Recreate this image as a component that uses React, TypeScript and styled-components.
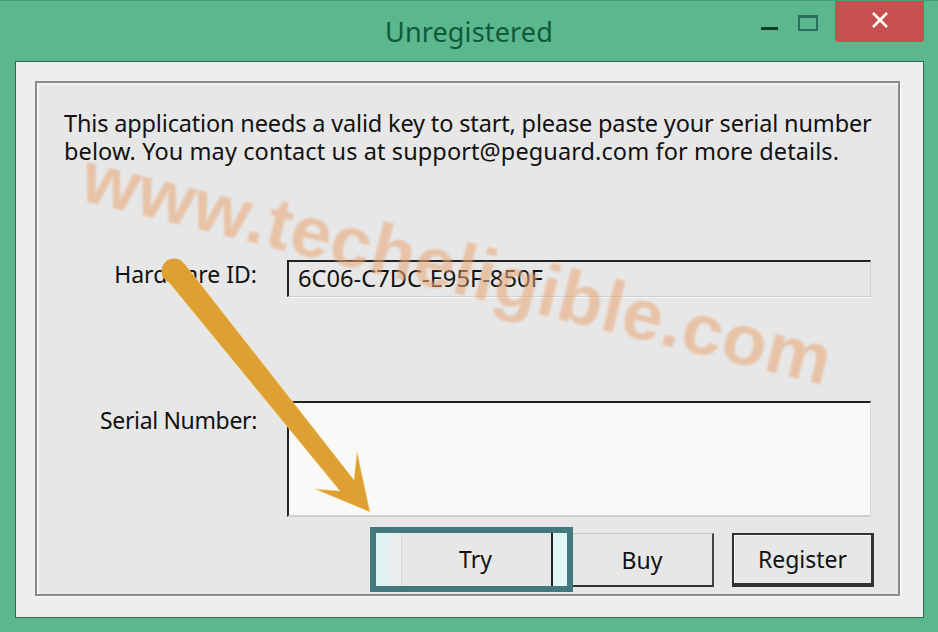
import React from "react";
import styled, { createGlobalStyle } from "styled-components";

const GlobalStyle = createGlobalStyle`
  html, body {
    margin: 0;
    padding: 0;
    background: #5bb78d;
  }
`;

function App() {
  return (
    <Window>
      <GlobalStyle />
      <TitleBar>
        <Title>Unregistered</Title>
        <MinimizeBtn />
        <MaximizeBtn />
        <CloseBtn>
          <svg width="18" height="16" viewBox="0 0 18 16">
            <path d="M2 1 L16 15 M16 1 L2 15" stroke="#fff" strokeWidth="2.6" fill="none" />
          </svg>
        </CloseBtn>
      </TitleBar>
      <Body>
        <GroupBox>
          <Message>
            <MessageLine $spacing={-0.16}>
              This application needs a valid key to start, please paste your serial number
            </MessageLine>
            <MessageLine $spacing={0.1}>
              below. You may contact us at support@peguard.com for more details.
            </MessageLine>
          </Message>
          <HardwareRow>
            <FieldLabel>Hardware ID:</FieldLabel>
            <ReadOnlyField>6C06-C7DC-E95F-850F</ReadOnlyField>
          </HardwareRow>
          <SerialRow>
            <SerialLabel>Serial Number:</SerialLabel>
            <SerialField />
          </SerialRow>
          <ButtonRow>
            <FocusRing>
              <TryButton>Try</TryButton>
            </FocusRing>
            <BuyButton>Buy</BuyButton>
            <RegisterButton>Register</RegisterButton>
          </ButtonRow>
        </GroupBox>
      </Body>
      <Watermark>www.techeligible.com</Watermark>
      <Arrow width="938" height="632" viewBox="0 0 938 632">
        <path
          d="M167 279 L340 490 L315 488 L370 511 L357 451 L354 479 L184 262 Z"
          fill="#dea033"
          stroke="#f5d98a"
          strokeWidth="1"
          strokeOpacity="0.5"
        />
        <circle cx="174" cy="270" r="12.5" fill="#dea033" />
      </Arrow>
    </Window>
  );
}

export default App;

const Window = styled.div`
  position: relative;
  width: 938px;
  height: 632px;
  box-sizing: border-box;
  overflow: hidden;
  display: flex;
  flex-direction: column;
  background: #5bb78d;
  border-top: 1px solid #4a9b77;
  padding: 0 14px 14px 15px;
  font-family: "Noto Sans", "DejaVu Sans", sans-serif;
  color: #111;
`;

const TitleBar = styled.div`
  position: relative;
  flex: 0 0 60px;
  display: flex;
  align-items: flex-start;
`;

const Title = styled.div`
  position: absolute;
  left: 370px;
  top: 12px;
  font-size: 27px;
  line-height: 38px;
  color: #0f5a3c;
  letter-spacing: 0.15px;
`;

const MinimizeBtn = styled.div`
  position: absolute;
  left: 746px;
  top: 26px;
  width: 17px;
  height: 3px;
  background: #0d3d28;
`;

const MaximizeBtn = styled.div`
  position: absolute;
  left: 783px;
  top: 14px;
  width: 20px;
  height: 16px;
  box-sizing: border-box;
  border: 2px solid #2c6e5a;
  border-top-width: 3px;
`;

const CloseBtn = styled.div`
  position: absolute;
  left: 820px;
  top: -1px;
  width: 89px;
  height: 42px;
  display: flex;
  align-items: center;
  justify-content: center;
  padding-bottom: 2px;
  box-sizing: border-box;
  background: #c94f50;
  border-radius: 0 0 3px 3px;
`;

const Body = styled.div`
  flex: 1;
  min-width: 0;
  display: flex;
  box-sizing: border-box;
  background: #eeefed;
  border: 1px solid #2f6b52;
  padding: 19px 23px 21px 19px;
`;

const GroupBox = styled.div`
  flex: 1;
  min-width: 0;
  display: flex;
  flex-direction: column;
  box-sizing: border-box;
  background: #e7e7e7;
  border: 2px solid #8a8a8a;
  box-shadow: inset 2px 2px 0 #f4f4f4, 1px 1px 0 #fafafa;
  padding: 26px 26px 0 27px;
`;

const Message = styled.div`
  font-size: 23.5px;
  line-height: 28px;
  white-space: nowrap;
  color: #111;
`;

const MessageLine = styled.div<{ $spacing: number }>`
  letter-spacing: ${(p) => p.$spacing}px;
`;

const HardwareRow = styled.div`
  display: grid;
  grid-template-columns: 194px 584px;
  column-gap: 30px;
  margin-top: 95px;
  margin-left: -1px;
`;

const SerialRow = styled(HardwareRow)`
  margin-top: 104px;
`;

const FieldLabel = styled.div`
  font-size: 23px;
  line-height: 28px;
  text-align: right;
  white-space: nowrap;
`;

const SerialLabel = styled(FieldLabel)`
  padding-top: 5px;
  letter-spacing: -0.35px;
`;

const ReadOnlyField = styled.div`
  height: 37px;
  box-sizing: border-box;
  border-top: 2px solid #222;
  border-left: 2px solid #222;
  border-right: 1px solid #d0d0d0;
  border-bottom: 1px solid #cfcfcf;
  box-shadow: 0 1px 0 #f7f7f7;
  padding-left: 9px;
  font-size: 23.7px;
  line-height: 33px;
  color: #111;
`;

const SerialField = styled.div`
  height: 116px;
  box-sizing: border-box;
  background: #f9f9f8;
  border-top: 2px solid #222;
  border-left: 2px solid #222;
  border-right: 1px solid #d8d8d8;
  border-bottom: 2px solid #cfcfcf;
`;

const ButtonRow = styled.div`
  display: flex;
  align-items: flex-start;
  justify-content: flex-end;
  margin-top: 10px;
  margin-right: -2px;
`;

const FocusRing = styled.div`
  position: relative;
  width: 203px;
  height: 65px;
  box-sizing: border-box;
  border: 6px solid #43797c;
  background: linear-gradient(
    to right,
    #dcf5f5 0,
    #ececec 22px,
    #ececec calc(100% - 14px),
    #e2f6f5 calc(100% - 14px)
  );
  padding: 0 14px 0 25px;
  margin-right: -6px;
`;

const BaseButton = styled.button`
  font-family: inherit;
  font-size: 23px;
  color: #111;
  box-sizing: border-box;
  background: #e7e7e7;
  padding: 0;
  height: 54px;
`;

const TryButton = styled(BaseButton)`
  display: block;
  width: 100%;
  height: 100%;
  border: none;
  border-right: 2px solid #222;
  border-left: 1px solid #d8d8d8;
  padding-right: 2px;
  padding-bottom: 2px;
`;

const BuyButton = styled(BaseButton)`
  width: 147px;
  margin-top: 6px;
  border: none;
  border-top: 1px solid #c8c8c8;
  border-right: 2px solid #444;
  border-bottom: 2px solid #333;
  padding-left: 5px;
`;

const RegisterButton = styled(BaseButton)`
  width: 142px;
  margin-top: 6px;
  margin-left: 18px;
  border-style: solid;
  border-color: #333;
  border-width: 2px 3px 4px 2px;
  box-shadow: inset 1px 1px 0 #fafafa;
`;

const Watermark = styled.div`
  position: absolute;
  left: 84px;
  top: 134px;
  transform: rotate(14deg);
  transform-origin: 0 50%;
  font-family: "Liberation Sans", sans-serif;
  font-weight: 700;
  font-size: 73px;
  line-height: 80px;
  letter-spacing: 0.5px;
  white-space: nowrap;
  color: #e8a97a;
  opacity: 0.58;
  filter: blur(0.9px);
  pointer-events: none;
`;

const Arrow = styled.svg`
  position: absolute;
  left: 0;
  top: 0;
  pointer-events: none;
`;
